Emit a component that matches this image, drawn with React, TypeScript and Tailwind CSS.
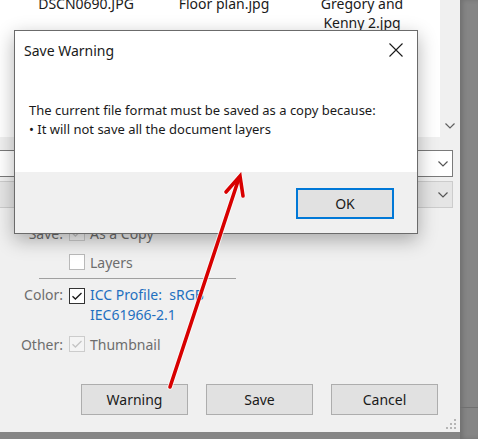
import React from "react"

type BoxProps = { checked?: boolean; tone: "off" | "on" | "dim" }

function CheckBox({ checked, tone }: BoxProps) {
  const box =
    tone === "on"
      ? "border-[#333333] bg-white"
      : tone === "dim"
        ? "border-[#cccccc] bg-[#f4f4f4]"
        : "border-[#b9b9b9] bg-white"
  const mark = tone === "on" ? "#1a1a1a" : "#c4c4c4"
  return (
    <div className={`w-[16px] h-[16px] shrink-0 border ${box} flex items-center justify-center`}>
      {checked && (
        <svg width="12" height="12" viewBox="0 0 12 12">
          <path d="M1.5 6.2 L4.4 9 L10.5 3" fill="none" stroke={mark} strokeWidth="1.3" />
        </svg>
      )}
    </div>
  )
}

function Chevron({ color = "#555" }: { color?: string }) {
  return (
    <svg width="10" height="6" viewBox="0 0 10 6">
      <path d="M0.5 0.5 L5 5 L9.5 0.5" fill="none" stroke={color} strokeWidth="1.2" />
    </svg>
  )
}

function WinButton({ label }: { label: string }) {
  return (
    <button className="w-[107px] h-[31px] bg-[#e1e1e1] border border-[#adadad] text-[14px] text-[#1a1a1a]">
      {label}
    </button>
  )
}

export default function App() {
  return (
    <div className="relative w-[478px] h-[439px] overflow-hidden bg-[#858585] flex font-['Noto_Sans','Open_Sans',sans-serif]">
      {/* background save-as window */}
      <div className="w-[460px] h-[432px] bg-[#f0f0f0] flex flex-col shrink-0">
        <div className="flex h-[137px]">
          <div className="w-[440px] bg-white overflow-hidden">
            <div className="flex -mt-[6px] pl-[17px] text-[14px] leading-[19px] text-[#1a1a1a]">
              <div className="w-[138px] text-center">DSCN0690.JPG</div>
              <div className="w-[138px] text-center">Floor plan.jpg</div>
              <div className="w-[138px] text-center">Gregory and<br />Kenny 2.jpg</div>
            </div>
          </div>
          <div className="w-[20px] flex flex-col justify-end items-center pb-[8px]">
            <Chevron color="#606060" />
          </div>
        </div>

        <div className="mt-[13px] flex flex-col gap-[4px] pr-[7px]">
          <div className="h-[27px] bg-white border border-[#7a7a7a] border-l-0 flex items-center justify-end pr-[4px]">
            <Chevron />
          </div>
          <div className="h-[27px] bg-[#e5e5e5] border border-[#cccccc] border-l-0 flex items-center justify-end pr-[4px]">
            <Chevron />
          </div>
        </div>

        <div className="mt-[17px] flex flex-col text-[14px] text-[#6d6d6d]">
          <div className="flex items-center h-[16px]">
            <span className="w-[63px] text-right">Save:</span>
            <div className="ml-[6px]"><CheckBox checked tone="dim" /></div>
            <span className="ml-[5px]">As a Copy</span>
          </div>
          <div className="flex items-center h-[16px] mt-[13px]">
            <span className="w-[63px]" />
            <div className="ml-[6px]"><CheckBox tone="off" /></div>
            <span className="ml-[5px]">Layers</span>
          </div>
          <div className="ml-[39px] w-[197px] h-px bg-[#a0a0a0] mt-[8px]" />
          <div className="flex items-start mt-[6px] leading-[20px]">
            <span className="w-[63px] text-right">Color:</span>
            <div className="ml-[6px] mt-[3px]"><CheckBox checked tone="on" /></div>
            <span className="ml-[5px] text-[#1f6fbf]">
              ICC Profile:&nbsp; sRGB
              <br />
              IEC61966-2.1
            </span>
          </div>
          <div className="flex items-center h-[16px] mt-[11px]">
            <span className="w-[63px] text-right">Other:</span>
            <div className="ml-[6px]"><CheckBox checked tone="dim" /></div>
            <span className="ml-[5px]">Thumbnail</span>
          </div>
        </div>

        <div className="mt-auto flex flex-col">
          <div className="pl-[81px] flex gap-[18px]">
            <WinButton label="Warning" />
            <WinButton label="Save" />
            <WinButton label="Cancel" />
          </div>
          <div className="h-[17px] flex justify-end pr-[3px] pt-[3px]">
            <svg width="12" height="12" viewBox="0 0 12 12" fill="#b5b5b5">
              <rect x="9" y="1" width="2" height="2" />
              <rect x="5" y="5" width="2" height="2" />
              <rect x="9" y="5" width="2" height="2" />
              <rect x="1" y="9" width="2" height="2" />
              <rect x="5" y="9" width="2" height="2" />
              <rect x="9" y="9" width="2" height="2" />
            </svg>
          </div>
        </div>
      </div>
      <div className="flex-1 shadow-[inset_3px_0_4px_rgba(0,0,0,0.15)]">
        <div className="mt-[407px] h-[25px] border-t border-[#707070]" />
      </div>

      {/* Save Warning dialog */}
      <div className="absolute left-[14px] top-[30px] w-[404px] h-[204px] border border-[#6b6b6b] bg-white flex flex-col shadow-[0_6px_18px_rgba(0,0,0,0.3)]">
        <div className="h-[38px] flex items-center justify-between pl-[9px] pr-[14px]">
          <span className="text-[14px] text-[#1a1a1a]">Save Warning</span>
          <svg width="14" height="14" viewBox="0 0 14 14">
            <path d="M0.5 0.5 L13.5 13.5 M13.5 0.5 L0.5 13.5" stroke="#1a1a1a" strokeWidth="1.1" />
          </svg>
        </div>
        <div className="flex-1 pl-[14px] pt-[32px] text-[13px] leading-[19px] text-[#1a1a1a]">
          <div>The current file format must be saved as a copy because:</div>
          <div>• It will not save all the document layers</div>
        </div>
        <div className="h-[61px] bg-[#f0f0f0] flex justify-end items-start pt-[16px] pr-[23px]">
          <button className="w-[98px] h-[31px] border-2 border-[#0078d7] bg-[#e1e1e1] text-[14px] text-[#1a1a1a]">
            OK
          </button>
        </div>
      </div>

      {/* red annotation arrow */}
      <svg className="absolute inset-0 pointer-events-none" width="478" height="439" viewBox="0 0 478 439">
        <g fill="none" strokeLinecap="round" strokeLinejoin="miter">
          <path d="M170 387 L239 178" stroke="rgba(255,255,255,0.7)" strokeWidth="5.5" strokeDasharray="1 1" />
          <path d="M226 192 L240 176 L243 196" stroke="rgba(255,255,255,0.7)" strokeWidth="5.5" strokeDasharray="1 1" />
          <path d="M170 387 L239 178" stroke="#d80000" strokeWidth="3.6" />
          <path d="M226 192 L240 176 L243 196" stroke="#d80000" strokeWidth="3.6" />
        </g>
      </svg>
    </div>
  )
}
